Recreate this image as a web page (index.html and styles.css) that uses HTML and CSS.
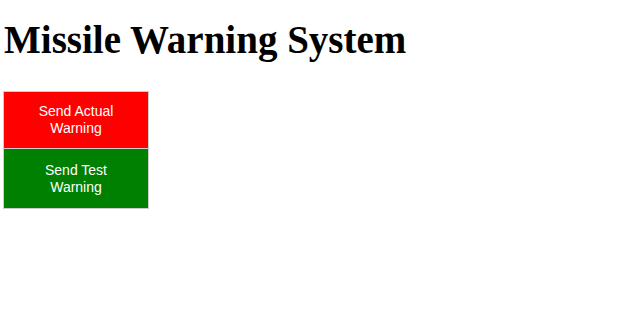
FILE: index.html
```html
<!DOCTYPE html>
<html>
<head>
<meta charset="utf-8">
<link rel="stylesheet" href="styles.css">
</head>
<body>
<h1 class="title">Missile Warning System</h1>
<div class="buttons">
  <button class="btn btn-actual">Send Actual Warning</button>
  <button class="btn btn-test">Send Test Warning</button>
</div>
</body>
</html>
```
FILE: styles.css
```css
html, body {
  margin: 0;
  padding: 0;
  background: #fff;
}
body {
  padding: 0 4px;
  font-family: "Liberation Serif", "Times New Roman", serif;
}
.title {
  font-size: 39px;
  font-weight: bold;
  margin: 17px 0 29px 0;
  line-height: 45px;
  color: #000;
}
.buttons {
  display: flex;
  flex-direction: column;
  width: 146px;
  margin-left: -1px;
}
.btn {
  box-sizing: border-box;
  width: 146px;
  height: 58px;
  border: 1px solid #ccc;
  color: #fff;
  font-family: "Liberation Sans", Arial, sans-serif;
  font-size: 14px;
  line-height: 17px;
  padding: 0 30px;
  margin: 0;
  text-align: center;
}
.btn-actual {
  background: #ff0000;
}
.btn-test {
  background: #008000;
  height: 61px;
  margin-top: -1px;
}
```
